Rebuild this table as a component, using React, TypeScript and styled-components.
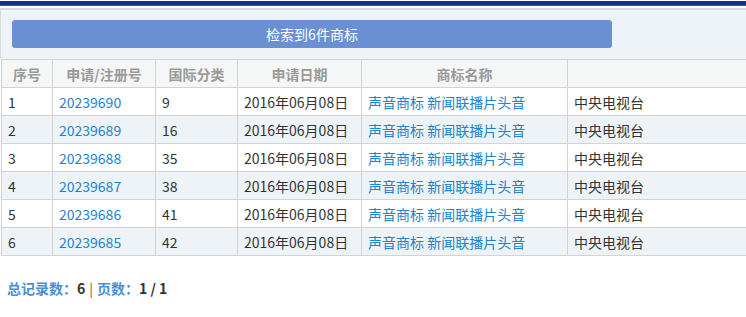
import React from "react";
import styled, { createGlobalStyle } from "styled-components";

const Global = createGlobalStyle`
  html, body { margin: 0; padding: 0; background: #fff; overflow: hidden; }
  body { font-family: "Noto Sans CJK SC", "Noto Sans", sans-serif; font-size: 14px; color: #333; }
`;

const Page = styled.div`
  width: 746px;
  height: 317px;
  overflow: hidden;
  display: flex;
  flex-direction: column;
`;

const TopBar = styled.div`
  margin-top: 1px;
  height: 4px;
  background: #0b3393;
  border-bottom: 1px solid #2a5cb4;
`;

const Panel = styled.div`
  margin-top: 2px;
  border-top: 2px solid #d7dbe0;
  border-left: 1px solid #d7dbe0;
  background: #eef3f8;
  padding: 10px 0 11px 11px;
`;

const SearchButton = styled.div`
  width: 600px;
  height: 28px;
  border-radius: 3px;
  background: #6a8fd2;
  color: #fff;
  font-size: 14px;
  display: flex;
  align-items: center;
  justify-content: center;
`;

const Table = styled.table`
  border-collapse: collapse;
  width: 790px;
  table-layout: fixed;
  margin-left: 1px;
`;

const Th = styled.th<{ $w?: number }>`
  width: ${(p) => (p.$w ? `${p.$w}px` : "auto")};
  height: 27px;
  padding: 0;
  background: #f5f6f6;
  border: 1px solid #d3d3d3;
  color: #9a9a9a;
  font-weight: bold;
  font-size: 14px;
  text-align: center;
`;

const Row = styled.tr<{ $alt: boolean }>`
  background: ${(p) => (p.$alt ? "#eef3f8" : "#fff")};
`;

const Td = styled.td<{ $link?: boolean }>`
  height: 27px;
  padding: 0 0 0 6px;
  border: 1px solid #d3d3d3;
  color: ${(p) => (p.$link ? "#2083cf" : "#333")};
  font-size: 14px;
  white-space: nowrap;
  overflow: hidden;
`;

const Footer = styled.div`
  padding: 22px 0 0 7px;
  font-size: 14px;
  font-weight: bold;
  color: #333;
`;

const Label = styled.span`
  color: #4a8fd6;
`;

const Sep = styled.span`
  color: #8a5a2a;
  font-weight: normal;
  margin: 0 4px;
`;

const rows = [
  ["1", "20239690", "9"],
  ["2", "20239689", "16"],
  ["3", "20239688", "35"],
  ["4", "20239687", "38"],
  ["5", "20239686", "41"],
  ["6", "20239685", "42"],
];

export default function App() {
  return (
    <Page>
      <Global />
      <TopBar />
      <Panel>
        <SearchButton>检索到6件商标</SearchButton>
      </Panel>
      <Table>
        <thead>
          <tr>
            <Th $w={50}>序号</Th>
            <Th $w={102}>申请/注册号</Th>
            <Th $w={81}>国际分类</Th>
            <Th $w={123}>申请日期</Th>
            <Th $w={205}>商标名称</Th>
            <Th></Th>
          </tr>
        </thead>
        <tbody>
          {rows.map((r, i) => (
            <Row key={r[0]} $alt={i % 2 === 1}>
              <Td>{r[0]}</Td>
              <Td $link>{r[1]}</Td>
              <Td>{r[2]}</Td>
              <Td>2016年06月08日</Td>
              <Td $link>声音商标 新闻联播片头音</Td>
              <Td>中央电视台</Td>
            </Row>
          ))}
        </tbody>
      </Table>
      <Footer>
        <Label>总记录数：</Label>6<Sep>|</Sep>
        <Label>页数：</Label>1 / 1
      </Footer>
    </Page>
  );
}
